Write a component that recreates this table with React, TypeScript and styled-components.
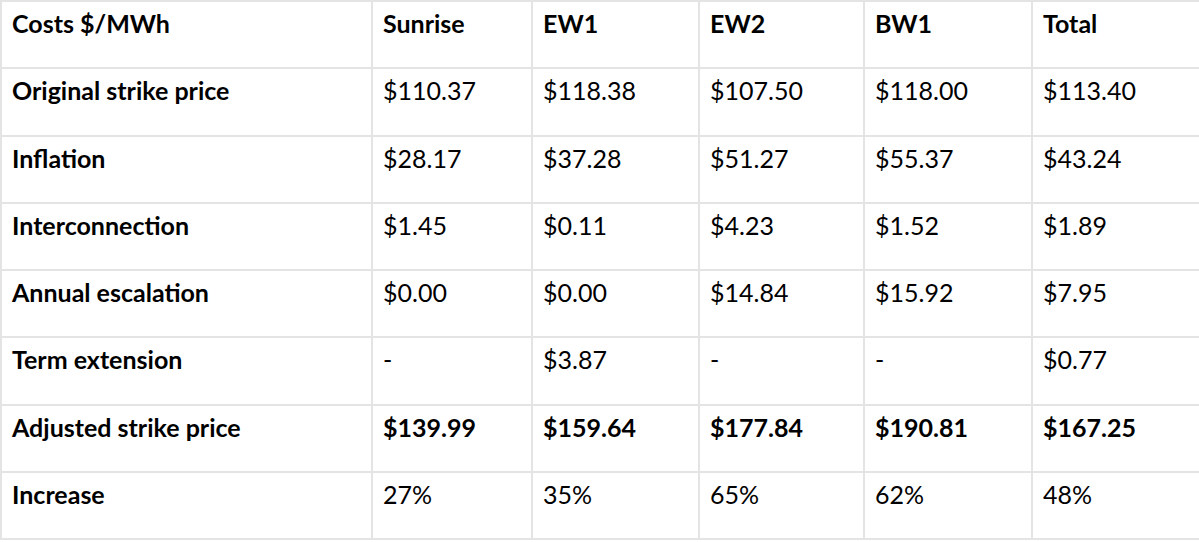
import React from "react";
import styled, { createGlobalStyle } from "styled-components";

const GlobalStyle = createGlobalStyle`
  body {
    margin: 0;
    background: #ffffff;
    font-family: Lato, "Liberation Sans", sans-serif;
    color: #000000;
  }
`;

const columns = ["Costs $/MWh", "Sunrise", "EW1", "EW2", "BW1", "Total"];

interface Row {
  label: string;
  values: string[];
  strong?: boolean;
}

const rows: Row[] = [
  { label: "Original strike price", values: ["$110.37", "$118.38", "$107.50", "$118.00", "$113.40"] },
  { label: "Inflation", values: ["$28.17", "$37.28", "$51.27", "$55.37", "$43.24"] },
  { label: "Interconnection", values: ["$1.45", "$0.11", "$4.23", "$1.52", "$1.89"] },
  { label: "Annual escalation", values: ["$0.00", "$0.00", "$14.84", "$15.92", "$7.95"] },
  { label: "Term extension", values: ["-", "$3.87", "-", "-", "$0.77"] },
  { label: "Adjusted strike price", values: ["$139.99", "$159.64", "$177.84", "$190.81", "$167.25"], strong: true },
  { label: "Increase", values: ["27%", "35%", "65%", "62%", "48%"] },
];

const App: React.FC = () => {
  return (
    <>
      <GlobalStyle />
      <StTable>
        {columns.map((col) => (
          <StCell key={col} $bold>
            {col}
          </StCell>
        ))}
        {rows.map((row) => (
          <React.Fragment key={row.label}>
            <StCell $bold>{row.label}</StCell>
            {row.values.map((v, i) => (
              <StCell key={i} $bold={row.strong}>
                {v}
              </StCell>
            ))}
          </React.Fragment>
        ))}
      </StTable>
    </>
  );
};

export default App;

const StTable = styled.div`
  display: grid;
  grid-template-columns: 371px 160px 167px 165px 168px 168px;
  grid-template-rows: repeat(8, 67.25px);
  width: 1199px;
  box-sizing: border-box;
  border-top: 2px solid #e4e4e4;
  border-left: 2px solid #e4e4e4;
`;

const StCell = styled.div<{ $bold?: boolean }>`
  box-sizing: border-box;
  padding: 6px 10px 0 10px;
  border-right: 2px solid #e4e4e4;
  border-bottom: 2px solid #e4e4e4;
  font-size: 25px;
  line-height: 30px;
  font-weight: ${(p) => (p.$bold ? 700 : 400)};
  white-space: nowrap;
`;
